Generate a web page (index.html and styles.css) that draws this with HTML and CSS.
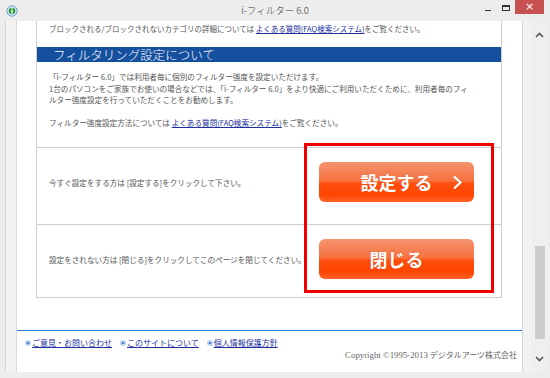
FILE: index.html
```html
<!DOCTYPE html>
<html lang="ja">
<head>
    <meta charset="UTF-8">
    <title>i-フィルター 6.0</title>
    <link rel="stylesheet" href="styles.css">
</head>
<body>
    <div class="window">
        <div class="titlebar">
            <svg class="app-icon" width="12" height="12" viewBox="0 0 12 12">
                <circle cx="6" cy="6" r="5.2" fill="#d6e8f6" stroke="#6d9fca" stroke-width="1"/>
                <circle cx="6" cy="6" r="3.3" fill="#2f9d3c"/>
                <rect x="5.3" y="3.2" width="1.4" height="1.2" fill="#fff"/>
                <rect x="5.3" y="5" width="1.4" height="3.6" fill="#fff"/>
            </svg>
            <div class="title">i-フィルター 6.0</div>
            <div class="controls">
                <span class="min"></span>
                <span class="max"></span>
                <span class="close">×</span>
            </div>
        </div>

        <div class="client">
            <div class="viewport">
                <div class="page">
                    <div class="wrap">
                        <div class="content">
                            <p class="note">ブロックされる/ブロックされないカテゴリの詳細については <a href="#">よくある質問(FAQ検索システム)</a>をご覧ください。</p>
                            <h2 class="heading">フィルタリング設定について</h2>
                            <p class="intro">
                                「i-フィルター 6.0」では利用者毎に個別のフィルター強度を設定いただけます。<br>
                                1台のパソコンをご家族でお使いの場合などでは、「i-フィルター 6.0」をより快適にご利用いただくために、利用者毎のフィ<br>
                                ルター強度設定を行っていただくことをお勧めします。
                            </p>
                            <p class="faq">フィルター強度設定方法については <a href="#">よくある質問(FAQ検索システム)</a>をご覧ください。</p>

                            <div class="rows">
                                <div class="row first">
                                    <p>今すぐ設定をする方は [設定する]をクリックして下さい。</p>
                                    <button class="btn">設定する
                                        <svg class="chev" width="11" height="15" viewBox="0 0 11 15">
                                            <polyline points="2,1.5 8.5,7.5 2,13.5" fill="none" stroke="#fff" stroke-width="2.2"/>
                                        </svg>
                                    </button>
                                </div>
                                <div class="row second">
                                    <p>設定をされない方は [閉じる]をクリックしてこのページを閉じてください。</p>
                                    <button class="btn">閉じる</button>
                                </div>
                                <div class="mark"></div>
                            </div>
                        </div>
                    </div>

                    <div class="footer">
                        <ul class="links">
                            <li><i class="bullet"></i><a href="#">ご意見・お問い合わせ</a></li>
                            <li><i class="bullet"></i><a href="#">このサイトについて</a></li>
                            <li><i class="bullet"></i><a href="#">個人情報保護方針</a></li>
                        </ul>
                        <p class="copy"><span class="latin">Copyright ©1995-2013</span> デジタルアーツ株式会社</p>
                    </div>
                </div>
            </div>

            <div class="scrollbar">
                <div class="arrow">
                    <svg width="9" height="6" viewBox="0 0 9 6"><polyline points="1,5 4.5,1.5 8,5" fill="none" stroke="#555" stroke-width="1.6"/></svg>
                </div>
                <div class="thumb"></div>
                <div class="arrow down">
                    <svg width="9" height="6" viewBox="0 0 9 6"><polyline points="1,1 4.5,4.5 8,1" fill="none" stroke="#555" stroke-width="1.6"/></svg>
                </div>
            </div>
        </div>
    </div>
</body>
</html>
```

FILE: styles.css
```css
* { margin:0; padding:0; box-sizing:border-box;}
ul,li { list-style:none;}
body { width:550px; height:378px; overflow:hidden; font-family:"Noto Sans CJK JP", sans-serif; background:#ececec;}
a { color:#22309e; text-decoration:underline;}

.window { width:550px; height:378px; display:flex; flex-direction:column; background:#ededed;}

/* title bar */
.titlebar { height:21px; display:grid; grid-template-columns:1fr auto 1fr; align-items:start;}
.app-icon { margin:5px 0 0 6px;}
.title { font-size:9.5px; line-height:21px; color:#3a3a3a; font-weight:300;}
.controls { display:flex; justify-content:flex-end; align-items:flex-start;}
.controls .min { width:6px; height:1px; background:#333; margin-top:10px;}
.controls .max { width:8px; height:6px; border:1px solid #333; border-top-width:2px; margin:5px 0 0 11px;}
.controls .close { width:29px; height:14px; margin:0 6px 0 5px; background:#c75050; color:#fff; font-size:11px; line-height:13px; text-align:center; font-family:"DejaVu Sans", sans-serif;}

/* client */
.client { flex:1; display:flex; margin:0 2px 6px 5px; overflow:hidden;}
.viewport { flex:1; background:#f2f2f2; border-left:1px solid #d6d6d6; padding:0 8px 0 10px; overflow:hidden;}
.page { background:#fff; border-left:1px solid #d8d8d8; border-right:1px solid #d8d8d8; height:100%;}
.wrap { padding:0 20px 0 19px;}
.content { border:1px solid #cfcfcf; border-top:none;}

.note { padding:2px 12px 0; font-size:7.5px; line-height:11px; color:#555;}
.heading { margin-top:13px; height:15px; padding-left:16px; background:#15509f; color:#fff; font-size:12.5px; font-weight:300; line-height:15px;}
.intro { padding:9px 12px 0; font-size:7.6px; line-height:11.5px; color:#555; white-space:nowrap;}
.faq { padding:11.5px 12px 0; font-size:7.6px; line-height:11.5px; color:#555;}

.rows { margin-top:18.5px; position:relative;}
.row { display:flex; justify-content:space-between; align-items:center; border-top:1px solid #cfcfcf; padding:14px 27px 22px 12px;}
.row.second { padding-bottom:18px;}
.row p { font-size:7.6px; line-height:11px; color:#555;}

.btn { position:relative; width:155px; height:40px; border:none; border-radius:6px; display:flex; justify-content:center; align-items:center; color:#fff; font-family:"Noto Sans CJK JP", sans-serif; font-size:18px; font-weight:bold; text-shadow:0 0 1px rgba(150,40,0,0.4);
    background:linear-gradient(#f6946e 0%, #f47a4c 35%, #f9723f 46%, #ff4e0e 54%, #ff4500 82%, #ff6328 100%);}
.btn .chev { position:absolute; right:11px; top:13px;}

.mark { position:absolute; left:267px; top:-4px; width:190px; height:150px; border:3px solid #ee0000;}

/* footer */
.footer { margin-top:32px; border-top:1px solid #2a80d6; padding:7px 5px 0 8px;}
.links { display:flex; gap:8px; font-size:8px; line-height:10px;}
.links li { display:flex; align-items:center; gap:1px;}
.bullet { display:block; width:6px; height:6px; border-radius:50%; background:#b8d2f2; position:relative;}
.bullet::after { content:""; position:absolute; left:2px; top:1.5px; border-left:3px solid #2652c4; border-top:1.5px solid transparent; border-bottom:1.5px solid transparent;}
.copy { margin-top:2px; text-align:right; font-family:"Liberation Serif", "Noto Sans CJK JP", serif; font-size:8px; line-height:10px; color:#666;}
.copy .latin { font-size:8.8px;}

/* scrollbar */
.scrollbar { width:17px; display:flex; flex-direction:column; align-items:center; background:#efefef;}
.arrow { height:27px; display:flex; justify-content:center; align-items:center;}
.arrow.down { margin-top:auto;}
.thumb { margin-top:198px; width:10px; height:93px; background:#cdcdcd;}
```
